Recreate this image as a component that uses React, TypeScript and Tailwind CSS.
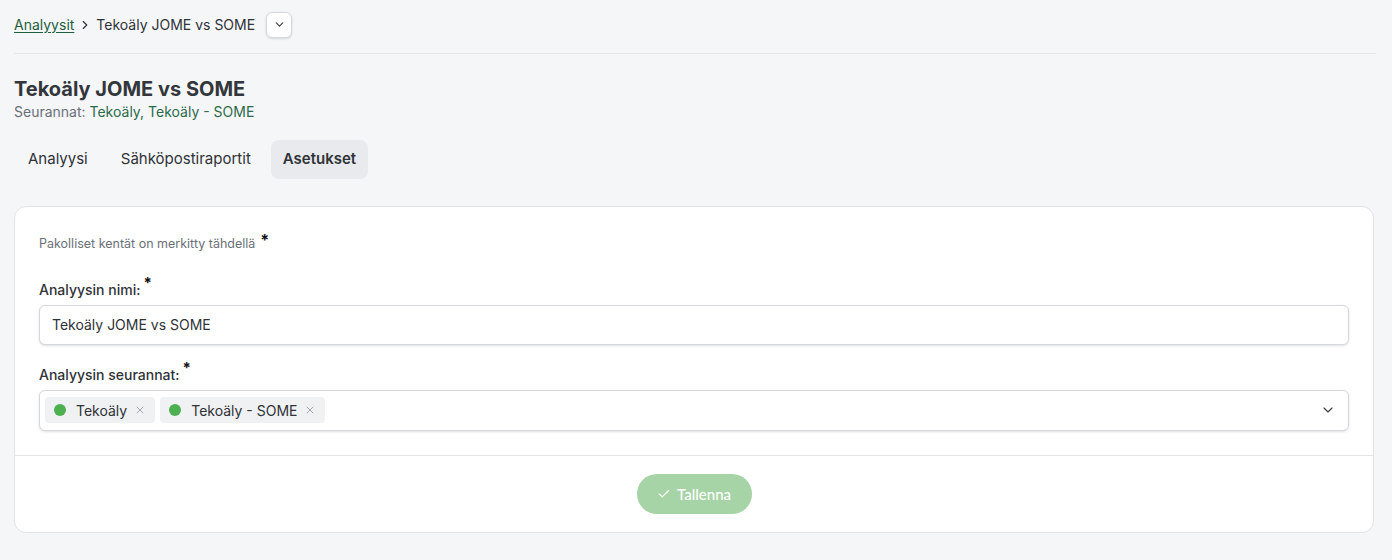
import { ChevronDown, ChevronRight, Check, X } from "lucide-react";

const sans = { fontFamily: "Inter, 'Noto Sans', sans-serif" };

function Chip({ label }: { label: string }) {
  return (
    <span className="flex h-[26px] items-center gap-[10px] rounded bg-[#f0f1f3] pl-[9px] pr-[9px] text-[14px] text-[#2f3237]">
      <span className="h-3 w-3 rounded-full bg-[#4caf50]" />
      <span className="flex items-center gap-[7px]">
        {label}
        <X size={12} strokeWidth={1.5} className="text-[#8a8f96]" />
      </span>
    </span>
  );
}

export default function App() {
  return (
    <div className="min-h-[560px] bg-[#f5f6f8] px-[14px] pb-7 text-[#2f3237]" style={sans}>
      {/* Breadcrumb */}
      <div className="flex h-[54px] w-[1362px] items-center border-b border-[#e3e5e8] pb-[8px] pt-[4px] text-[14px]">
        <a href="#" className="text-[#1f5f3f] underline underline-offset-2">
          Analyysit
        </a>
        <ChevronRight size={14} strokeWidth={2} className="mx-[4px] text-[#2f3237]" />
        <span>Tekoäly JOME vs SOME</span>
        <button className="ml-[11px] flex h-[26px] w-[26px] items-center justify-center rounded-md border border-[#d5d8dd] bg-white shadow-sm">
          <ChevronDown size={13} strokeWidth={2} className="text-[#3a3d42]" />
        </button>
      </div>

      {/* Title */}
      <div className="pt-[23px]">
        <h1 className="text-[20px] font-bold leading-[24px] text-[#33363b]">Tekoäly JOME vs SOME</h1>
        <div className="mt-[1px] text-[14px] leading-[20px] text-[#6b7078]">
          Seurannat: <span className="text-[#2c6a4c]">Tekoäly, Tekoäly - SOME</span>
        </div>
      </div>

      {/* Tabs */}
      <div className="mt-[18px] flex items-center gap-[5px] text-[15px]">
        <div className="flex h-[39px] items-center rounded-lg px-[14px] text-[#2f3237]">Analyysi</div>
        <div className="flex h-[39px] items-center rounded-lg px-[14px] text-[#2f3237]">Sähköpostiraportit</div>
        <div className="ml-[1px] flex h-[39px] items-center rounded-lg bg-[#e8eaed] px-[12px] font-semibold text-[#2f3237]">
          Asetukset
        </div>
      </div>

      {/* Card */}
      <div className="mt-[27px] w-[1360px] rounded-xl border border-[#e1e3e7] bg-white">
        <div className="px-6 pb-6 pt-[26px]">
          <div className="flex items-start text-[12.5px] text-[#6b7078]">
            <span className="mt-[2px]">Pakolliset kentät on merkitty tähdellä</span>
            <span className="ml-[5px] text-[16px] font-bold leading-[14px] text-[#111]">*</span>
          </div>

          <div className="mt-[23px] flex items-start text-[14px] font-medium text-[#2f3237]">
            <span className="mt-[2px]">Analyysin nimi:</span>
            <span className="ml-[3px] text-[15px] font-bold leading-[12px] text-[#111]">*</span>
          </div>
          <div className="mt-[5px] flex h-[40px] items-center rounded-md border border-[#d5d8dd] bg-white px-3 text-[14px] text-[#2f3237] shadow-sm">
            Tekoäly JOME vs SOME
          </div>

          <div className="mt-[17px] flex items-start text-[14px] font-medium text-[#2f3237]">
            <span className="mt-[2px]">Analyysin seurannat:</span>
            <span className="ml-[3px] text-[15px] font-bold leading-[12px] text-[#111]">*</span>
          </div>
          <div className="mt-[5px] flex h-[41px] items-center rounded-md border border-[#d5d8dd] bg-white pl-[5px] pr-[12px] shadow-sm">
            <div className="flex flex-1 items-center gap-[5px]">
              <Chip label="Tekoäly" />
              <Chip label="Tekoäly - SOME" />
            </div>
            <ChevronDown size={16} strokeWidth={1.75} className="text-[#3a3d42]" />
          </div>
        </div>

        <div className="flex h-[77px] items-center justify-center border-t border-[#e3e5e8]">
          <button
            className="flex h-[40px] w-[115px] items-center justify-center gap-[6px] rounded-full bg-[#a6d4a6] text-[15px] font-medium text-white"
            style={{ fontFamily: "Lato, 'Noto Sans', sans-serif" }}
          >
            <Check size={14} strokeWidth={2} />
            Tallenna
          </button>
        </div>
      </div>
    </div>
  );
}
